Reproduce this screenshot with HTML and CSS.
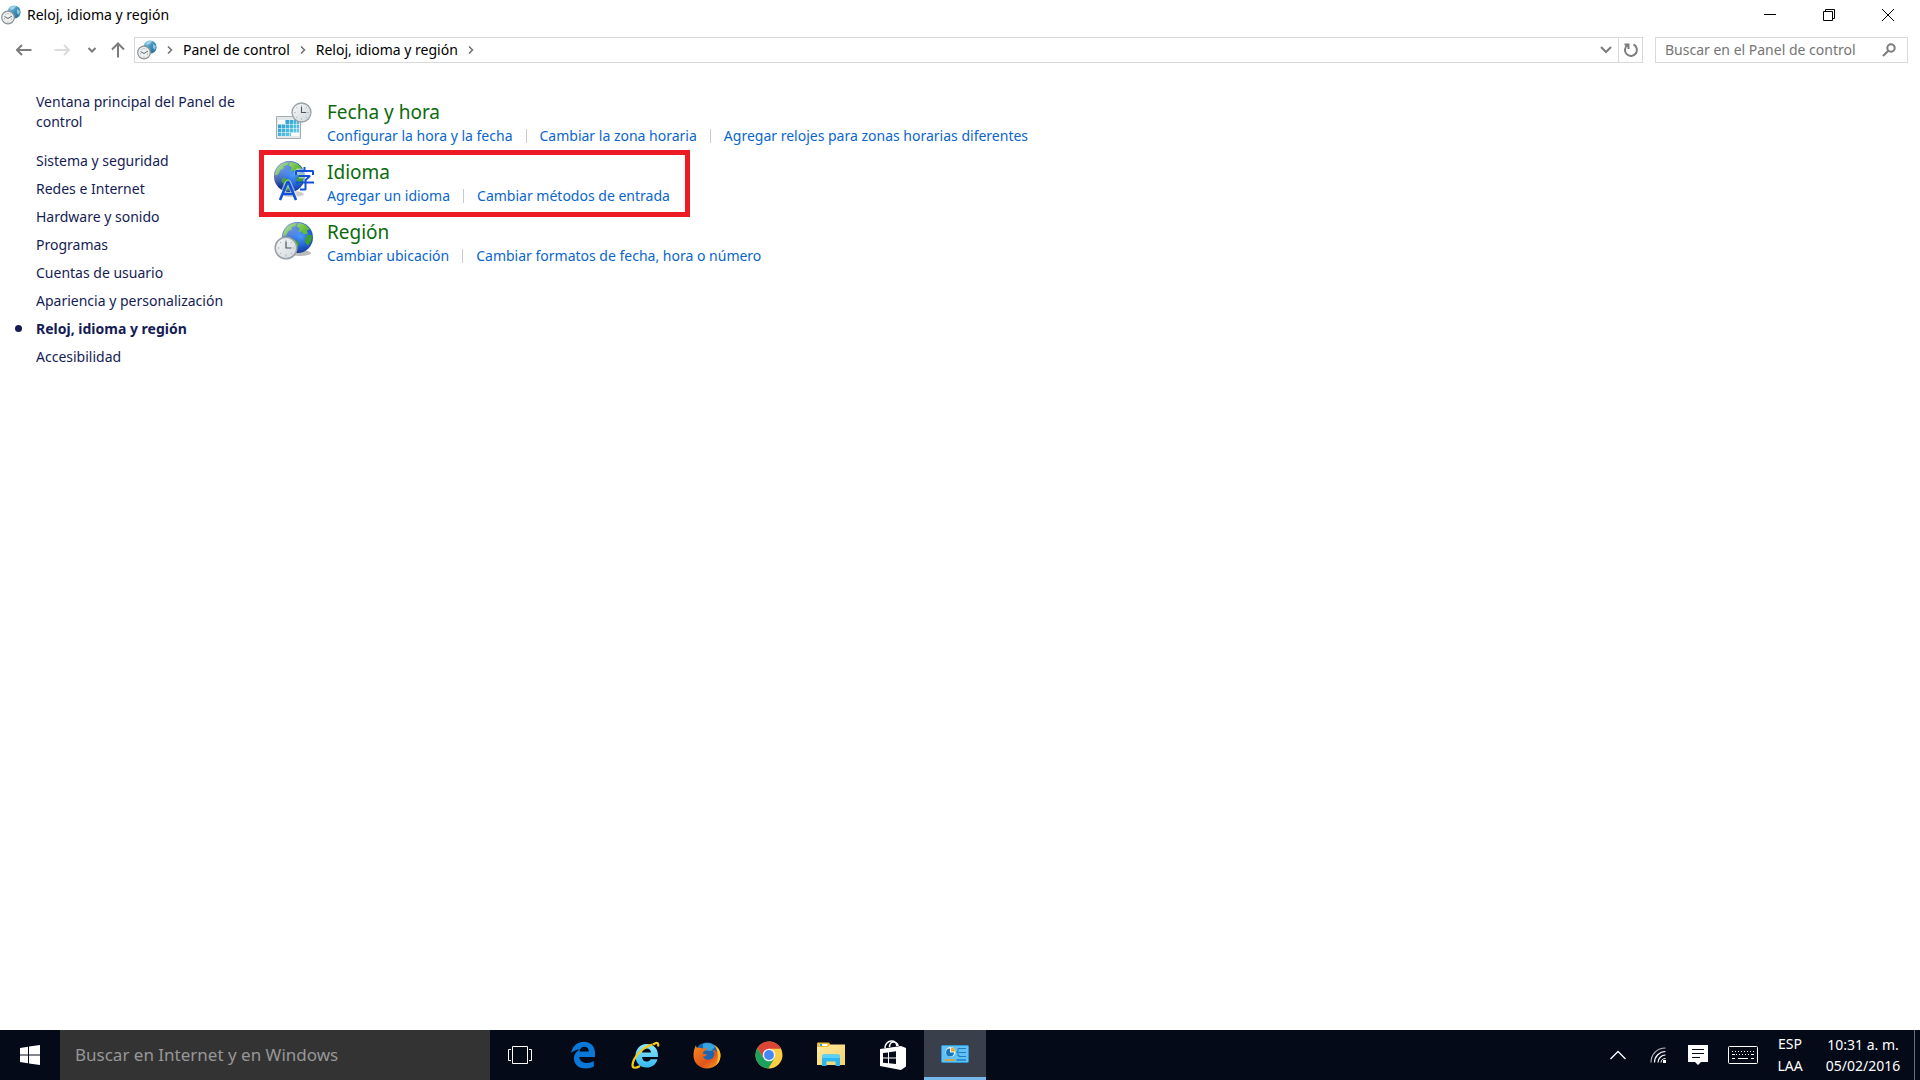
FILE: index.html
```html
<!DOCTYPE html>
<html lang="es">
<head>
    <meta charset="UTF-8">
    <meta name="viewport" content="width=device-width, initial-scale=1.0">
    <title>Reloj, idioma y región</title>
    <link rel="stylesheet" href="styles.css">
</head>
<body>
    <svg class="defs" aria-hidden="true">
        <defs>
            <radialGradient id="sea" cx="60%" cy="45%" r="60%">
                <stop offset="0" stop-color="#4a9bfa"/>
                <stop offset=".6" stop-color="#1f5ad0"/>
                <stop offset="1" stop-color="#16307e"/>
            </radialGradient>
            <linearGradient id="shine" x1="0" y1="0" x2="1" y2="1">
                <stop offset="0" stop-color="#fff" stop-opacity=".7"/>
                <stop offset=".5" stop-color="#fff" stop-opacity="0"/>
            </linearGradient>
            <linearGradient id="ball" x1="0" y1="0" x2="1" y2="1">
                <stop offset="0" stop-color="#9fd4ea"/>
                <stop offset=".5" stop-color="#3f93bd"/>
                <stop offset="1" stop-color="#1f6389"/>
            </linearGradient>
            <linearGradient id="face" x1="0" y1="0" x2="1" y2="1">
                <stop offset="0" stop-color="#f7f9fa"/>
                <stop offset="1" stop-color="#cfd6db"/>
            </linearGradient>
            <linearGradient id="cal" x1="0" y1="0" x2="1" y2="1">
                <stop offset="0" stop-color="#1f93c4"/>
                <stop offset="1" stop-color="#6fd6ee"/>
            </linearGradient>
            <linearGradient id="ie" x1="0" y1="0" x2="0" y2="1">
                <stop offset="0" stop-color="#8fe6ff"/>
                <stop offset="1" stop-color="#35b9f1"/>
            </linearGradient>
            <linearGradient id="fox" x1="0" y1="0" x2="1" y2="1">
                <stop offset="0" stop-color="#f58a1f"/>
                <stop offset=".6" stop-color="#e2531c"/>
                <stop offset="1" stop-color="#f7a823"/>
            </linearGradient>
            <linearGradient id="folder" x1="0" y1="0" x2="1" y2="1">
                <stop offset="0" stop-color="#ffeaa0"/>
                <stop offset="1" stop-color="#f5d36b"/>
            </linearGradient>
            <symbol id="globe" viewBox="0 0 32 32">
                <circle cx="16" cy="16" r="15" fill="url(#sea)"/>
                <path fill="#4bb031" d="M4 8c3-4 7-6 12-6l-2 3-4 1 1 2-4 2-2 4-3 1c0-3 1-5 2-7z"/>
                <path fill="#63bd34" d="M17 2c4 0 8 2 11 6l-3 1 1 3-4 1-2-3-3 1 1-4-3-2z"/>
                <path fill="#3f9f2c" d="M26 13l4 1c0 4-1 7-4 10l-3-4 1-4zM10 17l5 2 3 3-2 3-1 5-4-2-1-5-2-3z"/>
                <circle cx="16" cy="16" r="15" fill="url(#shine)"/>
            </symbol>
            <symbol id="clock" viewBox="0 0 20 20">
                <circle cx="10" cy="10" r="9" fill="url(#face)" stroke="#9aa3a9" stroke-width="1.3"/>
                <path d="M10 3v1.500M10 15.500V17M3 10h1.500M15.500 10H17M5 5l1 1M15 5l-1 1M5 15l1-1M15 15l-1-1" stroke="#9da5aa" stroke-width=".7"/>
                <path d="M10 4.500V10h4.500" fill="none" stroke="#4d565c" stroke-width="1"/>
            </symbol>
            <symbol id="clock-globe" viewBox="0 0 20 20">
                <circle cx="13" cy="7" r="6.600" fill="url(#ball)"/>
                <path fill="#b9e2f0" opacity=".7" d="M9 3c2-2 5-2 6-2l-2 3-3 1zM16 4l3 2-1 4-2-2z"/>
                <circle cx="7" cy="12.500" r="6.300" fill="#edf0f1" stroke="#8b9296" stroke-width="1.200"/>
                <path d="M3.500 11.500l3.500 2 4-2.500" fill="none" stroke="#60676b"/>
                <path d="M7 8v1M7 16.500v1M3 14l1-.4M10 14l1 .4M4.500 9l.7.7M9.500 9l-.7.7" stroke="#888" stroke-width=".8"/>
            </symbol>
        </defs>
    </svg>

    <header class="title-bar">
        <svg class="app-icon"><use href="#clock-globe"/></svg>
        <span class="window-title">Reloj, idioma y región</span>
        <div class="window-buttons">
            <button type="button" aria-label="Minimizar">
                <svg width="12" height="12"><path d="M0 5.500h12"/></svg>
            </button>
            <button type="button" aria-label="Restaurar">
                <svg width="12" height="12"><path d="M.5 2.500h9v9h-9zM2.500 2.500v-2h9v9h-2"/></svg>
            </button>
            <button type="button" aria-label="Cerrar">
                <svg width="12" height="12"><path d="M0 0l12 12M12 0L0 12"/></svg>
            </button>
        </div>
    </header>

    <div class="nav-bar">
        <div class="nav-buttons">
            <button type="button" class="nav-arrow" aria-label="Atrás">
                <svg width="16" height="12"><path d="M15.500 6H1M6 1L1 6l5 5"/></svg>
            </button>
            <button type="button" class="nav-arrow" aria-label="Adelante" disabled>
                <svg width="16" height="12"><path d="M.5 6H15M10 1l5 5-5 5"/></svg>
            </button>
            <button type="button" class="nav-recent" aria-label="Ubicaciones recientes">
                <svg width="8" height="6"><path d="M.5 1L4 4.500 7.500 1"/></svg>
            </button>
            <button type="button" class="nav-up" aria-label="Subir">
                <svg width="14" height="16"><path d="M7 15.500V1.500M1 7.500l6-6 6 6"/></svg>
            </button>
        </div>
        <nav class="address" aria-label="Dirección">
            <svg class="app-icon"><use href="#clock-globe"/></svg>
            <svg class="crumb-arrow" viewBox="0 0 6 8"><path d="M1 .5L4.500 4 1 7.500"/></svg>
            <a href="#">Panel de control</a>
            <svg class="crumb-arrow" viewBox="0 0 6 8"><path d="M1 .5L4.500 4 1 7.500"/></svg>
            <a href="#">Reloj, idioma y región</a>
            <svg class="crumb-arrow" viewBox="0 0 6 8"><path d="M1 .5L4.500 4 1 7.500"/></svg>
            <button type="button" class="address-drop" aria-label="Ubicaciones anteriores">
                <svg width="12" height="8"><path d="M1 1l5 5 5-5"/></svg>
            </button>
            <button type="button" class="address-refresh" aria-label="Actualizar">
                <svg width="16" height="16"><path d="M10.500 2.500A6 6 0 1 1 4.500 3M1.500 2.500H5.500V7"/></svg>
            </button>
        </nav>
        <form class="search">
            <input type="text" aria-label="Buscar en el Panel de control" placeholder="Buscar en el Panel de control">
            <button type="button" aria-label="Buscar">
                <svg width="14" height="14"><circle cx="9" cy="5" r="3.700"/><path d="M6.300 7.700L1 13"/></svg>
            </button>
        </form>
    </div>

    <div class="content">
        <aside class="sidebar">
            <a class="home" href="#">Ventana principal del Panel de control</a>
            <ul>
                <li><a href="#">Sistema y seguridad</a></li>
                <li><a href="#">Redes e Internet</a></li>
                <li><a href="#">Hardware y sonido</a></li>
                <li><a href="#">Programas</a></li>
                <li><a href="#">Cuentas de usuario</a></li>
                <li><a href="#">Apariencia y personalización</a></li>
                <li class="current"><a href="#">Reloj, idioma y región</a></li>
                <li><a href="#">Accesibilidad</a></li>
            </ul>
        </aside>

        <main class="categories">
            <section class="category">
                <svg class="category-icon" viewBox="0 0 42 44">
                    <path fill="#e3e8ea" stroke="#a3adb2" d="M4.500 17.500h24v22h-24z"/>
                    <path fill="url(#cal)" d="M6 21h21v16H6z"/>
                    <path stroke="#fff" stroke-opacity=".5" d="M9.500 21v16M13.500 21v16M17.500 21v16M21.500 21v16M24.500 21v16M6 25.500h21M6 29.500h21M6 33.500h21"/>
                    <path fill="#fff" d="M6 21h7v4H6zM19 34h8v3h-8z"/>
                    <use href="#clock" x="19" y="3" width="21" height="21"/>
                </svg>
                <div class="category-text">
                    <h2><a href="#">Fecha y hora</a></h2>
                    <ul class="tasks">
                        <li><a href="#">Configurar la hora y la fecha</a></li>
                        <li><a href="#">Cambiar la zona horaria</a></li>
                        <li><a href="#">Agregar relojes para zonas horarias diferentes</a></li>
                    </ul>
                </div>
            </section>
            <section class="category highlighted">
                <svg class="category-icon" viewBox="0 0 42 44">
                    <ellipse cx="20" cy="35" rx="12" ry="3" fill="#ccc"/>
                    <use href="#globe" x="1" y="1" width="33" height="33"/>
                    <g fill="none" stroke="#fff" stroke-opacity=".5" stroke-width="5" stroke-linejoin="bevel">
                        <path d="M8 40l7.500-17h1L24 40M25 16v-4h16v4M27 17h11l-4.500 4v9"/>
                    </g>
                    <g fill="none" stroke="#1350d8" stroke-linejoin="bevel">
                        <path stroke-width="2.600" d="M8 41l7.500-18h1L24 41M11 35h10"/>
                        <path stroke-width="2" d="M32.500 8v4M24 16v-4h17v4M27 17h11l-4.500 4v9.500H28M24 23.500h18"/>
                    </g>
                </svg>
                <div class="category-text">
                    <h2><a href="#">Idioma</a></h2>
                    <ul class="tasks">
                        <li><a href="#">Agregar un idioma</a></li>
                        <li><a href="#">Cambiar métodos de entrada</a></li>
                    </ul>
                </div>
            </section>
            <section class="category">
                <svg class="category-icon" viewBox="0 0 42 44">
                    <ellipse cx="28" cy="34" rx="11" ry="3" fill="#bbb"/>
                    <use href="#globe" x="9" y="2" width="33" height="33"/>
                    <use href="#clock" x="2" y="17" width="24" height="24"/>
                </svg>
                <div class="category-text">
                    <h2><a href="#">Región</a></h2>
                    <ul class="tasks">
                        <li><a href="#">Cambiar ubicación</a></li>
                        <li><a href="#">Cambiar formatos de fecha, hora o número</a></li>
                    </ul>
                </div>
            </section>
        </main>
    </div>

    <footer class="taskbar">
        <button type="button" class="start" aria-label="Inicio">
            <svg width="20" height="20" fill="#fff"><path d="M0 3l8-1.200V9.500H0zM9 1.600L20 0v9.500H9zM0 10.500h8v7.700L0 17zM9 10.500h11V20L9 18.400z"/></svg>
        </button>
        <input class="taskbar-search" type="text" aria-label="Buscar en Internet y en Windows" placeholder="Buscar en Internet y en Windows">
        <div class="apps">
            <button type="button" aria-label="Vista de tareas">
                <svg width="28" height="28" fill="none" stroke="#fff"><path d="M5.500 5.500h15v17h-15zM4 8.500H1.500v11H4M22 8.500h2.500v11H22"/></svg>
            </button>
            <button type="button" aria-label="Microsoft Edge">
                <svg width="28" height="28"><path fill="#0a78d7" d="M2 12C4 4 9 .8 15 .8c7 0 11 5 11 11.200V16H10.300c.3 4 3.700 6 7.700 6 2.500 0 5-.8 6.800-2v5.500c-2 1.300-5 2-8 2C9.500 27.500 5 23.500 5 17.500 5 13 7.500 10 11 8.400 6.500 8.600 4 10 2 12zm8.500-1.500h9.300c0-3-1.700-4.700-4.400-4.700-2.600 0-4.500 2-4.900 4.700z"/></svg>
            </button>
            <button type="button" aria-label="Internet Explorer">
                <svg width="30" height="30">
                    <path fill="url(#ie)" d="M28 17H12c.4 3 2 4.500 4.500 4.500 2 0 3.400-.8 4.200-2.300h6.800C26 24.500 22 27.500 16.500 27.500 10 27.500 5.500 22.800 5.500 16S10 4 16.500 4C24 4 28.500 9 28 17zm-7-4.500c-.3-2.500-1.800-4-4.400-4-2.500 0-4.100 1.500-4.600 4z"/>
                    <path fill="none" stroke="#f7c81c" stroke-width="2.200" d="M23 4.500c4-2.700 6-2.200 5 2M22.500 4.500C13 7 3 17 2.500 25c0 4 4 3 7.500 1"/>
                </svg>
            </button>
            <button type="button" aria-label="Firefox">
                <svg width="28" height="28">
                    <circle cx="14" cy="14" r="12.500" fill="#1c66b0"/>
                    <path fill="#37a4dd" d="M10 3c5-2 10-.5 12 3l-4 4-8-1z"/>
                    <path fill="url(#fox)" d="M3 4c0 1.500.5 2.500 1.500 3C6.500 6.500 8 6.500 9.500 7.500L14 7c-.5 2-2 3-3.500 3.500l-.5 2.300 4 .7c-1 2-2.500 2-4 2 2 4.500 8.500 4 10.500.5 1.500-3 .5-5.500-1-7 2 .2 3.500 1 4.500 2.500C24 8 22.500 5.500 21 4c4.500 2.500 6.600 6.500 6.500 11C27 22.500 21.500 27.500 14 27.500S.5 22 .5 14.500C.5 10 1.500 7 3 4z"/>
                    <path fill="#fbc12b" d="M21 4c5 2.500 7 7 6.400 12C27 20 25 23 22.500 24.500c2-3.500 3-8.500 2-12.500C24 8.500 23 6 21 4z"/>
                </svg>
            </button>
            <button type="button" aria-label="Google Chrome">
                <svg width="28" height="28">
                    <circle cx="14" cy="14" r="13.500" fill="#fdce44"/>
                    <path fill="#dc4437" d="M14 14V7.700h12A13.500 13.500 0 0 0 2.500 7L8.500 17.200z"/>
                    <path fill="#1da05d" d="M14 14L8.500 17.200 2.500 7A13.500 13.500 0 0 0 13.300 27.500L19.500 17.200z"/>
                    <circle cx="14" cy="14" r="6.300" fill="#f1f1f1"/>
                    <circle cx="14" cy="14" r="4.900" fill="#4587f4"/>
                </svg>
            </button>
            <button type="button" aria-label="Explorador de archivos">
                <svg width="28" height="28">
                    <path fill="#e9b93e" d="M0 3c0-1 .5-1.500 1.500-1.500H11c1 0 1.500.5 2 1.500l1 1.500V7H0z"/>
                    <path fill="#fff" d="M2.500 3h8v2h-8z"/>
                    <path fill="#2a9fe0" d="M3 3h2v2H3z"/>
                    <path fill="url(#folder)" d="M0 6h11l2.500-2.500H28V24H0z"/>
                    <path fill="#2db7ee" d="M5 25V15.500C5 14 6 13.500 7 13.500h14c1 0 2 .5 2 2V25h-4.500v-4.500h-9V25z"/>
                    <path fill="#5bd0f8" d="M5 17v-1.500C5 14 6 13.500 7 13.500h14c1 0 2 .5 2 2V17z"/>
                </svg>
            </button>
            <button type="button" aria-label="Tienda">
                <svg width="28" height="30">
                    <path fill="none" stroke="#fff" stroke-width="1.600" d="M6 8c0-4 3-7 6.500-7 3 0 5 2 5.500 5M10.500 7c0-3 2-5 4-5s4.500 1.500 4.500 4"/>
                    <path fill="#fff" d="M1 9l21-3 5 2v18.500L22 30 1 26z"/>
                    <path fill="#050a18" d="M4 13l5-.6v5H4zM10 12.200l7-.9v6.100h-7zM4 18.400h5v4.800l-5-.5zM10 18.400h7V24l-7-.7z"/>
                </svg>
            </button>
            <button type="button" class="active" aria-label="Panel de control">
                <svg width="28" height="20">
                    <rect x=".5" y="1.500" width="27" height="17" rx="1" fill="#62c1f3" stroke="#2f94d3"/>
                    <circle cx="9.500" cy="8" r="5" fill="#e5f5fd"/>
                    <path fill="#1476bd" d="M9 8.500V4.500a4 4 0 1 0 4 4z"/>
                    <path fill="#f6a61d" d="M10 7.500v-4a4 4 0 0 1 4 4z"/>
                    <path fill="none" stroke="#1c7ebe" d="M15 8h2V4.500h2M17 8v4h2M18 4.500h7M18 8.500h7M18 12.500h7"/>
                    <path stroke="#f39a16" stroke-width="1.500" d="M4 16h10"/>
                    <path stroke="#1c7ebe" stroke-width="1.500" d="M15.500 16H25"/>
                </svg>
            </button>
        </div>
        <div class="tray">
            <button type="button" class="tray-icon" aria-label="Mostrar iconos ocultos">
                <svg width="18" height="10"><path fill="none" stroke="#fff" stroke-width="1.300" d="M1.500 9L9 1.500 16.500 9"/></svg>
            </button>
            <button type="button" class="tray-icon" aria-label="Red">
                <svg width="16" height="16">
                    <g fill="none" stroke="#fff" stroke-width="1.200">
                        <path stroke-opacity=".7" d="M1 15.500C1 7 7 1 15.500 1"/>
                        <path d="M4.500 15.500c0-6 5-11 11-11M8 15.500c0-4 3.500-7.500 7.500-7.500"/>
                    </g>
                    <path fill="none" stroke="#fff" d="M11 15.500c0-2.500 2-4 4.500-4"/>
                    <path fill="#fff" d="M13 13h3v3h-3z"/>
                </svg>
            </button>
            <button type="button" class="tray-icon" aria-label="Centro de actividades">
                <svg width="20" height="20">
                    <path fill="#fff" d="M0 0h20v17h-7l-3 3-3-3H0z"/>
                    <path stroke="#050a18" d="M4 4.500h12M4 8.500h12M4 12.500h8"/>
                </svg>
            </button>
            <button type="button" class="tray-icon keyboard" aria-label="Teclado táctil">
                <svg width="30" height="18" fill="none" stroke="#fff">
                    <rect x=".5" y=".5" width="29" height="17" rx="1"/>
                    <path stroke-dasharray="1 2" d="M4 5.500h23M5 8.500h20"/>
                    <path d="M4 8.500h3M23 8.500h3M4 12.500h3M10 12.500h10M23 12.500h3" />
                </svg>
            </button>
            <button type="button" class="language">ESP<br>LAA</button>
            <button type="button" class="clock">10:31 a. m.<br>05/02/2016</button>
            <button type="button" class="show-desktop" aria-label="Mostrar escritorio"></button>
        </div>
    </footer>
</body>
</html>
```
FILE: styles.css
```css
html, body {
    margin: 0;
    padding: 0;
    height: 100%;
}
body {
    display: flex;
    flex-direction: column;
    background: #fff;
    color: #000;
    font-family: "Noto Sans", "Open Sans", sans-serif;
    font-size: 14px;
    line-height: 20px;
}
* {
    box-sizing: border-box;
}
a {
    color: inherit;
    text-decoration: none;
}
ul {
    list-style: none;
    margin: 0;
    padding: 0;
}
button {
    display: flex;
    align-items: center;
    justify-content: center;
    margin: 0;
    padding: 0;
    border: none;
    background: none;
    color: inherit;
    font: inherit;
}
input {
    margin: 0;
    border: none;
    border-radius: 0;
    font: inherit;
    outline: none;
}
svg {
    flex: none;
}
.defs {
    position: absolute;
    width: 0;
    height: 0;
}
.app-icon {
    width: 20px;
    height: 20px;
}

/* title bar */
.title-bar {
    display: flex;
    align-items: center;
    height: 30px;
    padding: 0 3px 0 1px;
}
.window-title {
    margin-left: 6px;
}
.window-buttons {
    display: flex;
    margin-left: auto;
    height: 100%;
}
.window-buttons button {
    width: 59px;
}
.window-buttons svg {
    fill: none;
    stroke: #000;
}

/* navigation bar */
.nav-bar {
    display: flex;
    align-items: center;
    height: 40px;
    padding-right: 12px;
}
.nav-buttons {
    display: flex;
    align-items: center;
    width: 134px;
    padding-left: 16px;
}
.nav-buttons svg,
.address button svg,
.search svg {
    fill: none;
    stroke: #7c7c7c;
    stroke-width: 2;
}
.nav-arrow {
    width: 16px;
    margin-right: 22px;
}
.nav-arrow:disabled {
    margin-right: 18px;
}
.nav-buttons .nav-arrow:disabled svg {
    stroke: #dcdcdc;
}
.nav-recent {
    width: 8px;
    margin-right: 12px;
}
.nav-up {
    width: 20px;
}
.address {
    display: flex;
    align-items: center;
    flex: 1;
    height: 26px;
    margin-right: 12px;
    padding-left: 2px;
    border: 1px solid #d9d9d9;
}
.crumb-arrow {
    width: 6px;
    height: 8px;
    margin: 0 10px;
    fill: none;
    stroke: #6f6f6f;
    stroke-width: 1.5;
}
.address-drop {
    width: 24px;
    height: 100%;
    margin-left: auto;
}
.address-refresh {
    width: 24px;
    height: 100%;
    border-left: 1px solid #d9d9d9;
}
.search {
    display: flex;
    width: 253px;
    height: 26px;
    border: 1px solid #d9d9d9;
}
.search input {
    flex: 1;
    min-width: 0;
    padding: 0 0 0 9px;
}
.search input::placeholder {
    color: #757575;
    opacity: 1;
}
.search button {
    width: 36px;
}

/* content */
.content {
    display: flex;
    flex: 1;
    min-height: 0;
}
.sidebar {
    width: 264px;
    padding: 22px 22px 0 36px;
    color: #151c55;
}
.home {
    display: block;
    margin-bottom: 15px;
}
.sidebar li {
    position: relative;
    padding: 4px 0;
}
.current {
    font-weight: bold;
}
.current::before {
    content: "";
    position: absolute;
    left: -21px;
    top: 10px;
    width: 7px;
    height: 7px;
    border-radius: 50%;
    background: #151c55;
}
.categories {
    display: flex;
    flex-direction: column;
    align-items: flex-start;
    gap: 3px;
    padding-top: 25px;
}
.category {
    display: flex;
    gap: 13px;
    height: 57px;
    padding: 4px 15px 0 8px;
}
.category.highlighted {
    outline: 5px solid #ed1c24;
}
.category-icon {
    width: 42px;
    height: 44px;
}
.category h2 {
    margin: 0;
    color: #0b6b0b;
    font-size: 19px;
    font-weight: normal;
    line-height: 26px;
}
.tasks {
    display: flex;
    color: #0a66cc;
    line-height: 22px;
}
.tasks li {
    display: flex;
    align-items: center;
}
.tasks li + li::before {
    content: "";
    width: 1px;
    height: 14px;
    margin: 0 13px;
    background: #ccc;
}

/* taskbar */
.taskbar {
    display: flex;
    height: 50px;
    background: #040a18;
    color: #fff;
}
.start {
    width: 60px;
}
.taskbar-search {
    width: 430px;
    padding: 0 15px;
    background: #333;
    color: #fff;
    font-size: 17px;
}
.taskbar-search::placeholder {
    color: #979797;
    opacity: 1;
}
.apps {
    display: flex;
}
.apps button {
    width: 62px;
}
.apps .active {
    background: #3a3f4c;
    border-bottom: 3px solid #76b9ed;
}
.tray {
    display: flex;
    margin-left: auto;
}
.tray-icon {
    width: 40px;
}
.tray-icon.keyboard {
    width: 50px;
}
.language {
    width: 44px;
    line-height: 22px;
}
.clock {
    width: 102px;
    line-height: 21px;
}
.show-desktop {
    width: 6px;
    border-left: 1px solid #6b6f78;
}
```
